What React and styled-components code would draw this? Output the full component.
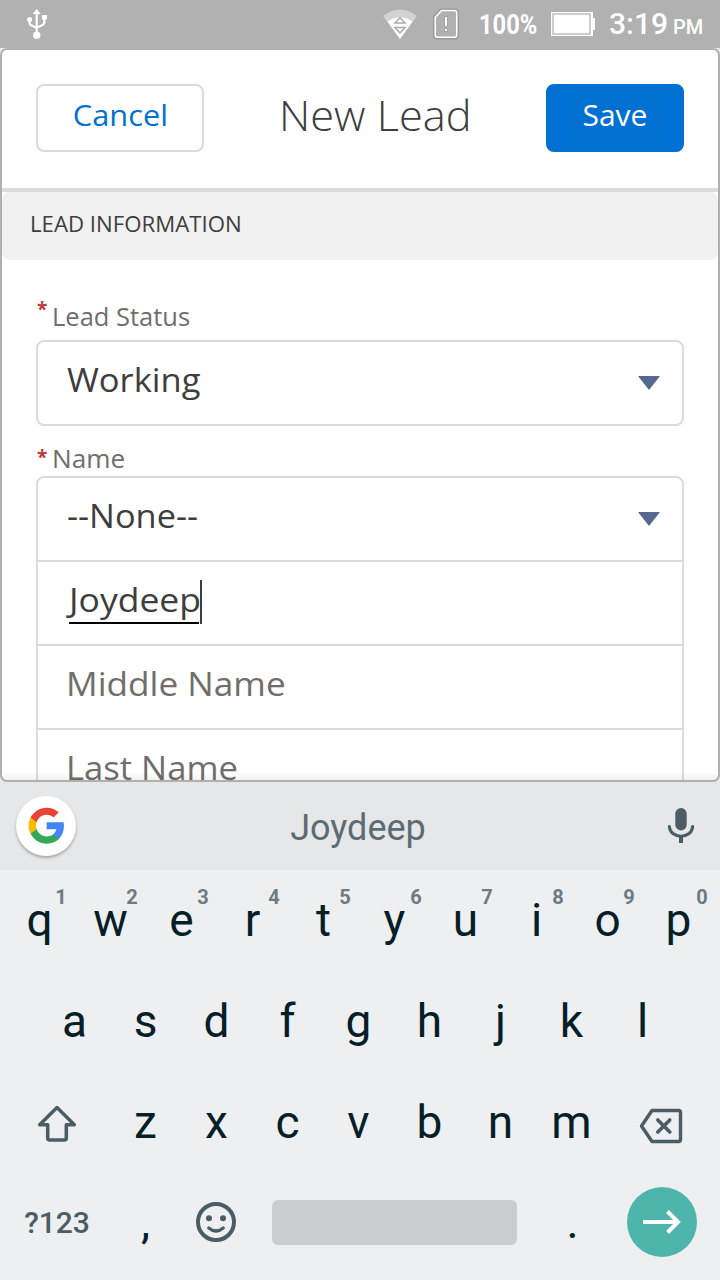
import React from "react";
import styled, { createGlobalStyle } from "styled-components";

const GlobalStyle = createGlobalStyle`
  * { box-sizing: border-box; }
  body { margin: 0; background: #edeff1; }
`;

const Phone = styled.div`
  width: 720px;
  height: 1280px;
  display: flex;
  flex-direction: column;
  overflow: hidden;
  background: #e9ebec;
  font-family: "Open Sans", "Noto Sans", sans-serif;
`;

const StatusBar = styled.header`
  height: 48px;
  flex: none;
  display: flex;
  align-items: center;
  padding: 0 16px 0 26px;
  background: #b1b1b1;
  color: #fff;
  font-family: Roboto, sans-serif;
`;

const StatusIcon = styled.svg`
  flex: none;
  margin-left: ${(p) => p.$gap || 0}px;
`;

const BatteryLevel = styled.span`
  width: 57px;
  margin-left: 20px;
  padding-top: 2px;
  font-size: 27.5px;
  font-weight: 700;
  line-height: 46px;
  white-space: nowrap;
  transform: scaleX(0.86);
  transform-origin: left;
`;

const Clock = styled.span`
  margin-left: 14px;
  padding-top: 3px;
  font-size: 30px;
  font-weight: 500;
  line-height: 45px;
  white-space: nowrap;
`;

const Meridiem = styled.span`
  margin-left: 5px;
  font-size: 20px;
`;

const Sheet = styled.main`
  height: 734px;
  flex: none;
  border: 2px solid #b0b0b0;
  border-radius: 7px;
  background: #fff;
  overflow: hidden;
  position: relative;
`;

const SheetShade = styled.div`
  position: absolute;
  left: 0;
  right: 0;
  bottom: 0;
  height: 8px;
  background: linear-gradient(rgba(0, 0, 0, 0), rgba(0, 0, 0, 0.05));
`;

const TitleBar = styled.div`
  height: 142px;
  padding: 34px 34px 0 34px;
  border-bottom: 4px solid #dddbda;
  display: flex;
  justify-content: space-between;
  align-items: flex-start;
`;

const Button = styled.button`
  width: ${(p) => p.$width}px;
  height: 68px;
  padding: 0 0 7px;
  border: 2px solid ${(p) => (p.$primary ? "#0070d2" : "#dddbda")};
  border-radius: 8px;
  background: ${(p) => (p.$primary ? "#0070d2" : "#fff")};
  color: ${(p) => (p.$primary ? "#fff" : "#0070d2")};
  font: 400 30px "Open Sans", sans-serif;
`;

const Title = styled.h1`
  margin: 0;
  padding-top: 1px;
  font-size: 42px;
  font-weight: 300;
  line-height: 60px;
  color: #3e3e3c;
`;

const SectionHeader = styled.h2`
  margin: 0;
  height: 68px;
  padding: 0 28px 4px;
  border-radius: 8px;
  background: #f1f1f1;
  color: #3e3e3c;
  font-size: 21.5px;
  font-weight: 400;
  line-height: 64px;
`;

const WideText = styled.span`
  display: inline-block;
  margin-left: ${(p) => p.$indent || 0}px;
  white-space: nowrap;
  transform: scaleX(${(p) => p.$stretch || 1.03});
  transform-origin: ${(p) => (p.$centered ? "center" : "left")};
`;

const Form = styled.div`
  padding: 38px 34px 0;
`;

const Label = styled.label`
  height: ${(p) => p.$height}px;
  display: flex;
  align-items: flex-start;
  color: #706e6b;
  font-size: 25.5px;
  line-height: 36px;
`;

const Required = styled.span`
  width: 16px;
  flex: none;
  padding-left: 1px;
  color: #c23934;
  font-size: 19px;
  font-weight: 700;
  line-height: ${(p) => p.$line}px;
`;

const FieldBox = styled.div`
  border: 2px solid #dddbda;
  border-radius: 8px;
  margin-bottom: ${(p) => p.$after || 0}px;
`;

const FieldRow = styled.div`
  height: ${(p) => (p.$last ? 82 : 84)}px;
  padding: 0 21px 8px 29px;
  border-bottom: ${(p) => (p.$last ? "none" : "2px solid #dddbda")};
  display: flex;
  align-items: center;
  justify-content: space-between;
  color: ${(p) => (p.$placeholder ? "#706e6b" : "#3e3e3c")};
  font-size: 33.5px;
  line-height: 46px;
`;

const Composing = styled.span`
  position: relative;
  height: 46px;
  display: block;
`;

const ComposingLine = styled.span`
  position: absolute;
  left: 1.5px;
  top: 46px;
  width: 130px;
  height: 2px;
  background: #000;
`;

const Caret = styled.span`
  position: absolute;
  left: 133px;
  top: 4px;
  width: 2px;
  height: 44px;
  background: #3e3e3c;
`;

const Chevron = styled.svg`
  margin-top: 7px;
`;

const SuggestionBar = styled.div`
  height: 88px;
  flex: none;
  display: flex;
  align-items: center;
  padding: 0 24px 0 16px;
  background: #e5e7e9;
  font-family: Roboto, sans-serif;
`;

const GoogleButton = styled.div`
  width: 60px;
  height: 60px;
  flex: none;
  padding-left: 1px;
  border-radius: 50%;
  background: #fff;
  box-shadow: 0 2px 3px rgba(0, 0, 0, 0.28);
  display: flex;
  align-items: center;
  justify-content: center;
`;

const Suggestion = styled.span`
  flex: 1;
  padding: 4px 26px 0 0;
  text-align: center;
  color: #5d6b72;
  font-size: 36px;
  line-height: 42px;
`;

const Keyboard = styled.div`
  flex: 1;
  background: #edeff1;
  color: #061e28;
  font-family: Roboto, sans-serif;
`;

const KeyRow = styled.div`
  height: ${(p) => p.$height || 101}px;
  padding-left: ${(p) => p.$inset || 4}px;
  padding-bottom: 1px;
  display: flex;
  align-items: center;
`;

const Key = styled.div`
  position: relative;
  width: ${(p) => p.$width || 71}px;
  height: 100%;
  flex: none;
  padding-top: ${(p) => p.$drop || 0}px;
  padding-right: ${(p) => p.$nudge || 0}px;
  display: flex;
  align-items: center;
  justify-content: center;
  font-size: 46px;
`;

const KeyHint = styled.span`
  position: absolute;
  left: 46px;
  top: 17px;
  width: 22px;
  text-align: center;
  color: #6d7b81;
  font-size: 20px;
  font-weight: 700;
  line-height: 20px;

  ${Key}:last-child > & {
    left: 48px;
  }
`;

const SymbolsLabel = styled.span`
  color: #4b5c64;
  font-size: 30px;
  font-weight: 500;
`;

const SpaceBar = styled.div`
  width: 245px;
  height: 45px;
  margin: 2px 20px 0;
  border-radius: 6px;
  background: #cacdd0;
`;

const EnterButton = styled.div`
  width: 70px;
  height: 70px;
  border-radius: 50%;
  background: #4eb5ac;
  display: flex;
  align-items: center;
  justify-content: center;
`;

const UsbIcon = () => (
  <StatusIcon width="22" height="32" viewBox="0 0 22 32" fill="none" stroke="#fff" strokeWidth="2.2">
    <path d="M10.700 5v21M3.600 12v3.500l1 1.500 6 3M18.300 10v5l-1.200 1.700-6.400 3" />
    <path d="M10.700 1l4 5h-8zM16 7h5v4.500h-5z" fill="#fff" stroke="none" />
    <circle cx="3.600" cy="11.600" r="2.500" fill="#fff" stroke="none" />
    <circle cx="10.700" cy="27.300" r="3.700" fill="#fff" stroke="none" />
  </StatusIcon>
);

const WifiIcon = () => (
  <StatusIcon $gap={335} width="34" height="30" viewBox="0 0 34 30">
    <path d="M0 7Q17-6 34 7L17 30Z" fill="#d2d2d2" />
    <path d="M4.500 12.500Q17 4 29.500 12.500L17 30Z" fill="#fff" />
    <path d="M12 14l5-5.500 5 5.500zM12 18.500h10l-5 5.500z" fill="#fff" stroke="#aaa" strokeWidth="1.500" />
  </StatusIcon>
);

const SimIcon = () => (
  <StatusIcon $gap={16} width="26" height="32" viewBox="0 0 26 32" fill="none">
    <path d="M8 2h14q2.500 0 2.500 2.500v23q0 2.500-2.500 2.500H4q-2.500 0-2.500-2.500V9z" stroke="#969696" strokeWidth="3" />
    <path d="M8.500 2.500H21.500q2.300 0 2.300 2.300V27q0 2.300-2.300 2.300H4.500q-2.300 0-2.300-2.300V9.300z" fill="#b1b1b1" stroke="#fff" strokeWidth="1.600" />
    <path d="M11.500 8.500h3v10h-3zM11.500 20.500h3v3h-3z" fill="#fff" stroke="#969696" strokeWidth="0.800" />
  </StatusIcon>
);

const BatteryIcon = () => (
  <StatusIcon $gap={15} width="44" height="24" viewBox="0 0 44 24">
    <path d="M0 0h42v6h2v12h-2v6H0z" fill="#fff" />
    <path d="M2 2h37v20H2z" fill="none" stroke="#bdbdbd" strokeWidth="1.500" />
  </StatusIcon>
);

const DropArrow = () => (
  <Chevron width="24" height="16" viewBox="0 0 24 16">
    <path d="M1 1h22L12 15z" fill="#54698d" />
  </Chevron>
);

const GoogleLogo = () => (
  <svg width="39.300" height="39.300" viewBox="0 0 24 24">
    <path fill="#4285F4" d="M22.560 12.250c0-.780-.070-1.530-.200-2.250H12v4.260h5.920c-.260 1.370-1.040 2.530-2.210 3.310v2.770h3.570c2.080-1.920 3.280-4.740 3.280-8.090z" />
    <path fill="#34A853" d="M12 23c2.970 0 5.460-.980 7.280-2.660l-3.570-2.770c-.980.660-2.230 1.060-3.710 1.060-2.860 0-5.290-1.930-6.160-4.530H2.180v2.840C3.990 20.530 7.700 23 12 23z" />
    <path fill="#FBBC05" d="M5.840 14.090c-.220-.660-.350-1.360-.350-2.090s.130-1.430.350-2.090V7.070H2.180C1.430 8.550 1 10.220 1 12s.430 3.450 1.180 4.930l3.660-2.840z" />
    <path fill="#EA4335" d="M12 5.380c1.620 0 3.060.560 4.210 1.640l3.150-3.150C17.450 2.090 14.970 1 12 1 7.700 1 3.990 3.470 2.180 7.070l3.660 2.840c.870-2.600 3.300-4.530 6.160-4.530z" />
  </svg>
);

const MicIcon = () => (
  <svg width="30" height="38" viewBox="0 0 30 38">
    <rect x="9.300" y="1" width="11.400" height="22.500" rx="5.700" fill="#4b5c64" />
    <path d="M3.300 19.500C4.500 32.500 25.500 32.500 26.700 19.500" fill="none" stroke="#4b5c64" strokeWidth="3" strokeLinecap="round" />
    <path d="M15 29v7" stroke="#4b5c64" strokeWidth="4" />
  </svg>
);

const ShiftIcon = () => (
  <svg width="42" height="42" viewBox="0 0 42 42" fill="none" stroke="#4b5c64" strokeWidth="3.500" strokeLinejoin="round">
    <path d="M21 5.500L3.700 22.800H11.700V36q0 2 2 2h14.600q2 0 2-2V22.800H38.300z" />
  </svg>
);

const BackspaceIcon = () => (
  <svg width="44" height="36" viewBox="0 0 44 36" fill="none" stroke="#4b5c64" strokeWidth="3.400" strokeLinejoin="round">
    <path d="M13 2.500H39.500q2 0 2 2v27q0 2-2 2H13L2.500 18z" />
    <path d="M18.800 12l12 12M30.800 12l-12 12" strokeWidth="3.600" strokeLinecap="round" />
  </svg>
);

const SmileIcon = () => (
  <svg width="40" height="40" viewBox="0 0 40 40" fill="none" stroke="#4b5c64">
    <circle cx="20" cy="20" r="18" strokeWidth="4" />
    <circle cx="13" cy="16.300" r="3" fill="#4b5c64" stroke="none" />
    <circle cx="27" cy="16.300" r="3" fill="#4b5c64" stroke="none" />
    <path d="M12.700 26Q20 32 27.300 26" strokeWidth="3.200" strokeLinecap="round" />
  </svg>
);

const ArrowIcon = () => (
  <svg width="38" height="26" viewBox="0 0 38 26" fill="none" stroke="#fff" strokeWidth="4">
    <path d="M0 13h35M24.500 2.500L35 13 24.500 23.500" />
  </svg>
);

export default function App() {
  return (
    <Phone>
      <GlobalStyle />
      <StatusBar>
        <UsbIcon />
        <WifiIcon />
        <SimIcon />
        <BatteryLevel>100%</BatteryLevel>
        <BatteryIcon />
        <Clock>
          3:19<Meridiem>PM</Meridiem>
        </Clock>
      </StatusBar>

      <Sheet>
        <TitleBar>
          <Button $width={168}>
            <WideText $centered $stretch={1.025}>Cancel</WideText>
          </Button>
          <Title>
            <WideText $centered $stretch={1.032}>New Lead</WideText>
          </Title>
          <Button $width={138} $primary>Save</Button>
        </TitleBar>
        <SectionHeader>
          <WideText $stretch={1.033}>LEAD INFORMATION</WideText>
        </SectionHeader>
        <Form>
          <Label $height={42}>
            <Required $line={22}>*</Required>Lead Status
          </Label>
          <FieldBox $after={14}>
            <FieldRow $last>
              <WideText>Working</WideText>
              <DropArrow />
            </FieldRow>
          </FieldBox>
          <Label $height={36}>
            <Required $line={34}>*</Required>
            <WideText $stretch={1.025}>Name</WideText>
          </Label>
          <FieldBox>
            <FieldRow>
              <WideText $stretch={1.025}>--None--</WideText>
              <DropArrow />
            </FieldRow>
            <FieldRow>
              <Composing>
                <WideText $indent={2} $stretch={1.06}>Joydeep</WideText>
                <ComposingLine />
                <Caret />
              </Composing>
            </FieldRow>
            <FieldRow $placeholder>
              <WideText $indent={-1} $stretch={1.05}>Middle Name</WideText>
            </FieldRow>
            <FieldRow $placeholder $last>
              <WideText $indent={-1} $stretch={1.033}>Last Name</WideText>
            </FieldRow>
          </FieldBox>
        </Form>
        <SheetShade />
      </Sheet>

      <SuggestionBar>
        <GoogleButton>
          <GoogleLogo />
        </GoogleButton>
        <Suggestion>Joydeep</Suggestion>
        <MicIcon />
      </SuggestionBar>

      <Keyboard>
        <KeyRow>
          {[..."qwertyuiop"].map((letter, i) => (
            <Key key={letter}>
              {letter}
              <KeyHint>{(i + 1) % 10}</KeyHint>
            </Key>
          ))}
        </KeyRow>
        <KeyRow $inset={39}>
          {[..."asdfghjkl"].map((letter) => (
            <Key key={letter}>{letter}</Key>
          ))}
        </KeyRow>
        <KeyRow>
          <Key $width={106} $drop={1}>
            <ShiftIcon />
          </Key>
          {[..."zxcvbnm"].map((letter) => (
            <Key key={letter}>{letter}</Key>
          ))}
          <Key $width={109} $drop={7} $nudge={1}>
            <BackspaceIcon />
          </Key>
        </KeyRow>
        <KeyRow $height={98}>
          <Key $width={106} $drop={1}>
            <SymbolsLabel>?123</SymbolsLabel>
          </Key>
          <Key>,</Key>
          <Key $drop={1} $nudge={2}>
            <SmileIcon />
          </Key>
          <SpaceBar />
          <Key>.</Key>
          <Key $width={108} $drop={1}>
            <EnterButton>
              <ArrowIcon />
            </EnterButton>
          </Key>
        </KeyRow>
      </Keyboard>
    </Phone>
  );
}
